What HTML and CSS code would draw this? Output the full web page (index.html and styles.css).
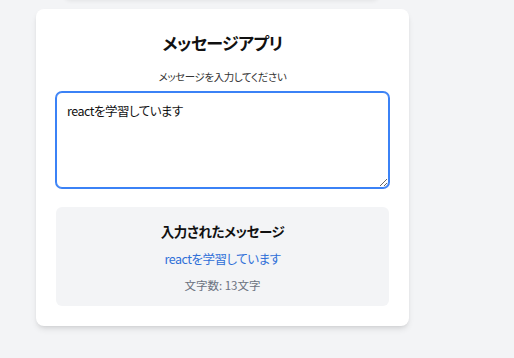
FILE: index.html
```html
<!DOCTYPE html>
<html lang="ja">
<head>
<meta charset="utf-8">
<title>メッセージアプリ</title>
<link rel="stylesheet" href="styles.css">
</head>
<body>
<div class="prev"></div>
<main class="card">
  <h1 class="title">メッセージアプリ</h1>
  <label class="label" for="msg">メッセージを入力してください</label>
  <textarea id="msg" class="input" autofocus>reactを学習しています</textarea>
  <section class="result">
    <h2 class="result-title">入力されたメッセージ</h2>
    <p class="result-text">reactを学習しています</p>
    <p class="count">文字数: 13文字</p>
  </section>
</main>
<script src="script.js"></script>
</body>
</html>
```
FILE: styles.css
```css
* { box-sizing: border-box; }
html, body { margin: 0; padding: 0; }
body {
  background: #f3f4f6;
  font-family: "Noto Sans CJK JP", "Noto Sans", sans-serif;
  font-feature-settings: "palt";
  display: flex;
  flex-direction: column;
  align-items: flex-start;
  height: 358px;
  overflow: hidden;
}
.prev {
  width: 317px;
  height: 40px;
  margin: -41px 0 0 63px;
  background: #ffffff;
  border-radius: 8px;
  box-shadow: 0 2px 4px rgba(0,0,0,0.07);
}
.card {
  width: 373px;
  margin: 10px 0 0 36px;
  background: #ffffff;
  border-radius: 8px;
  padding: 20px 20px 20px;
  box-shadow: 0 4px 6px -1px rgba(0,0,0,0.1), 0 2px 4px -2px rgba(0,0,0,0.1);
  display: flex;
  flex-direction: column;
}
.title {
  margin: 0 0 10px;
  font-size: 17px;
  letter-spacing: -0.6px;
  line-height: 28px;
  font-weight: 700;
  text-align: center;
  color: #111111;
}
.label {
  display: block;
  font-size: 10.5px;
  letter-spacing: -0.4px;
  line-height: 20px;
  text-align: center;
  color: #333333;
  margin-bottom: 5px;
}
.input {
  display: block;
  width: 100%;
  height: 96px;
  padding: 8px 10px;
  font-family: "Noto Sans CJK JP", "Noto Sans", sans-serif;
  font-feature-settings: "palt";
  font-size: 12.5px;
  letter-spacing: -0.5px;
  line-height: 20px;
  color: #111111;
  border: 1px solid #3b82f6;
  border-radius: 6px;
  box-shadow: 0 0 0 1px #3b82f6;
  outline: none;
  resize: vertical;
  margin: 0;
}
.result {
  margin-top: 19px;
  background: #f3f4f6;
  border-radius: 6px;
  padding: 14px 16px 13px;
  text-align: center;
}
.result-title {
  margin: 0;
  font-size: 13.5px;
  letter-spacing: -0.4px;
  line-height: 20px;
  font-weight: 700;
  color: #111111;
}
.result-text {
  margin: 8px 0 0;
  font-size: 12.5px;
  letter-spacing: -0.5px;
  line-height: 20px;
  color: #2f6fd8;
}
.count {
  margin: 8px 0 0;
  font-size: 11.5px;
  line-height: 16px;
  color: #6b7280;
}
```
FILE: script.js
```js
var ta = document.getElementById('msg');
ta.focus();
ta.setSelectionRange(ta.value.length, ta.value.length);
```
